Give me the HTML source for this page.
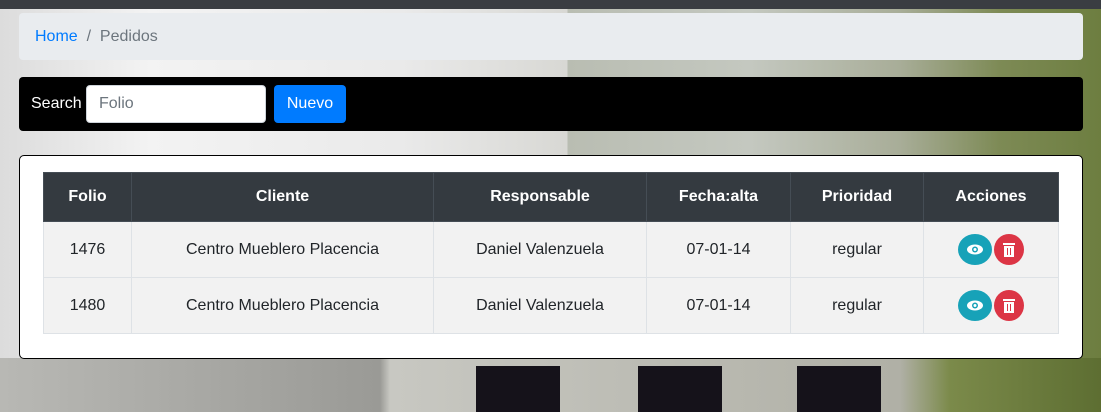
<!DOCTYPE html><html><head><style>
body{margin:0;width:1101px;height:412px;overflow:hidden;font-family:"Liberation Sans",sans-serif;position:relative;
background:linear-gradient(90deg,#dcdcdc 0,#f3f3f3 150px,#eaeaea 400px,#d8d8d4 567px,#b9bdb2 568px,#c4c8c0 750px,#a8ad98 900px,#7d8a55 1000px,#6d7e40 1101px);}
.top{position:absolute;left:0;top:0;width:1101px;height:9px;background:#3a3d42}
.bot{position:absolute;left:0;top:358px;width:1101px;height:54px;background:linear-gradient(90deg,#b8b8b4 0,#9a9a96 380px,#c8c8c2 390px,#b0b0a6 900px,#7b8a4a 950px,#5d6e32 1101px)}
.chair{position:absolute;top:366px;height:46px;width:84px;background:#15121a}
.bc{position:absolute;left:19px;top:13px;width:1064px;height:47px;background:#e9ecef;border-radius:4px;font-size:16px;line-height:47px;color:#6c757d}
.bc a{color:#007bff;margin-left:16px}
.sb{position:absolute;left:19px;top:77px;width:1064px;height:54px;background:#000;border-radius:4px}
.sb span{position:absolute;left:12px;top:18px;color:#fff;font-size:16px}
.inp{position:absolute;left:67px;top:8px;width:180px;height:38px;background:#fff;border:1px solid #ced4da;border-radius:4px;box-sizing:border-box;color:#6c757d;font-size:16px;line-height:36px;padding-left:12px}
.btn{position:absolute;left:255px;top:8px;width:72px;height:38px;background:#007bff;border-radius:4px;color:#fff;font-size:16px;line-height:38px;text-align:center}
.card{position:absolute;left:19px;top:155px;width:1062px;height:202px;background:#fff;border:1px solid #000;border-radius:5px}
table{position:absolute;left:23px;top:16px;border-collapse:collapse;width:1016px;font-size:16px;table-layout:fixed}
th{background:#343a40;color:#fff;height:49px;padding:0;font-weight:bold;border:1px solid #454d55;box-sizing:border-box}
td{background:#f2f2f2;height:56px;padding:0;text-align:center;border:1px solid #dee2e6;color:#212529;box-sizing:border-box}
.c{display:inline-block;width:34px;height:31px;border-radius:50%;vertical-align:middle;margin:0 1px;position:relative}
</style></head><body>
<div class="top"></div>
<div class="bot"></div>
<div class="chair" style="left:476px"></div><div class="chair" style="left:638px"></div><div class="chair" style="left:797px"></div>
<div class="bc"><a>Home</a> &nbsp;/&nbsp; Pedidos</div>
<div class="sb"><span>Search</span><div class="inp">Folio</div><div class="btn">Nuevo</div></div>
<div class="card"><table>
<colgroup><col style="width:88px"><col style="width:302px"><col style="width:213px"><col style="width:144px"><col style="width:133px"><col></colgroup>
<tr><th>Folio</th><th>Cliente</th><th>Responsable</th><th>Fecha:alta</th><th>Prioridad</th><th>Acciones</th></tr>
<tr><td>1476</td><td>Centro Mueblero Placencia</td><td>Daniel Valenzuela</td><td>07-01-14</td><td>regular</td><td><span class="c" style="background:#17a2b8"><svg width="34" height="31"><ellipse cx="17" cy="15.5" rx="8" ry="5" fill="#fff"/><circle cx="17" cy="15.5" r="3" fill="#17a2b8"/><circle cx="17" cy="15.5" r="1.5" fill="#fff"/></svg></span><span class="c" style="background:#dc3545;width:30px"><svg width="30" height="31"><rect x="9" y="9" width="12" height="2" fill="#fff"/><rect x="10" y="12" width="10" height="11" fill="#fff"/><rect x="13" y="14" width="1" height="7" fill="#dc3545"/><rect x="16" y="14" width="1" height="7" fill="#dc3545"/></svg></span></td></tr>
<tr><td>1480</td><td>Centro Mueblero Placencia</td><td>Daniel Valenzuela</td><td>07-01-14</td><td>regular</td><td><span class="c" style="background:#17a2b8"><svg width="34" height="31"><ellipse cx="17" cy="15.5" rx="8" ry="5" fill="#fff"/><circle cx="17" cy="15.5" r="3" fill="#17a2b8"/><circle cx="17" cy="15.5" r="1.5" fill="#fff"/></svg></span><span class="c" style="background:#dc3545;width:30px"><svg width="30" height="31"><rect x="9" y="9" width="12" height="2" fill="#fff"/><rect x="10" y="12" width="10" height="11" fill="#fff"/><rect x="13" y="14" width="1" height="7" fill="#dc3545"/><rect x="16" y="14" width="1" height="7" fill="#dc3545"/></svg></span></td></tr>
</table></div>
</body></html>
